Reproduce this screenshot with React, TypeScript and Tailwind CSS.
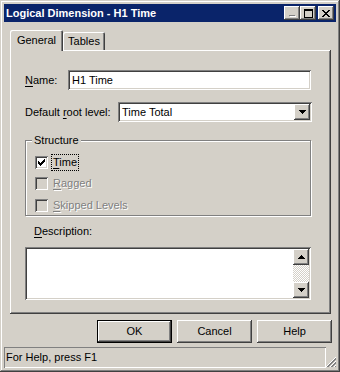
import React from 'react';

const raised = "shadow-[inset_-1px_-1px_#404040,inset_1px_1px_#ffffff,inset_-2px_-2px_#808080]";
const sunken = "shadow-[inset_1px_1px_#808080,inset_-1px_-1px_#ffffff,inset_2px_2px_#404040,inset_-2px_-2px_#d4d0c8]";

const U = ({ children }: { children: React.ReactNode }) => <span className="underline underline-offset-[2px]">{children}</span>;

const TitleButton = ({ children }: { children: React.ReactNode }) => (
  <div className={`w-[16px] h-[14px] bg-[#d4d0c8] flex items-center justify-center ${raised}`}>{children}</div>
);

const Checkbox = ({ checked, disabled }: { checked?: boolean; disabled?: boolean }) => (
  <div className={`w-[13px] h-[13px] shrink-0 relative ${sunken} ${disabled ? 'bg-[#d4d0c8]' : 'bg-white'}`}>
    {checked && (
      <svg width="13" height="13" viewBox="0 0 13 13" className="absolute left-0 top-0" shapeRendering="crispEdges">
        <path fill="#000" d="M9 3h1v1h-1zM8 4h2v1h-2zM3 5h1v1h-1zM7 5h3v1h-3zM3 6h2v1h-2zM6 6h3v1h-3zM3 7h5v1h-5zM4 8h3v1h-3zM5 9h1v1h-1z" />
      </svg>
    )}
  </div>
);

const ArrowBtn = ({ dir, disabled }: { dir: 'up' | 'down'; disabled?: boolean }) => (
  <div className={`w-[16px] h-[16px] bg-[#d4d0c8] flex items-center justify-center ${raised}`}>
    <svg width="7" height="4" viewBox="0 0 7 4" shapeRendering="crispEdges">
      <path fill={disabled ? '#808080' : '#000'} d={dir === 'down' ? 'M0 0h7v1h-7zM1 1h5v1h-5zM2 2h3v1h-3zM3 3h1v1h-1z' : 'M3 0h1v1h-1zM2 1h3v1h-3zM1 2h5v1h-5zM0 3h7v1h-7z'} />
    </svg>
  </div>
);

const PushButton = ({ label, isDefault }: { label: string; isDefault?: boolean }) => (
  <div className={`w-[75px] h-[23px] bg-[#d4d0c8] flex items-center justify-center ${isDefault ? 'shadow-[inset_0_0_0_1px_#000,inset_-2px_-2px_#404040,inset_2px_2px_#ffffff,inset_-3px_-3px_#808080]' : raised}`}>
    {label}
  </div>
);

export default function App() {
  return (
    <div
      className="w-[340px] h-[372px] bg-[#d4d0c8] p-[4px] flex flex-col text-[11px] text-black leading-none shadow-[inset_-1px_-1px_#404040,inset_1px_1px_#d4d0c8,inset_-2px_-2px_#808080,inset_2px_2px_#ffffff]"
      style={{ fontFamily: '"Liberation Sans", Arial, sans-serif' }}
    >
      {/* Title bar */}
      <div className="h-[18px] bg-[#0a246a] flex items-center justify-between pl-[2px] pr-[2px]">
        <span className="text-white font-bold text-[11px]">Logical Dimension - H1 Time</span>
        <div className="flex items-center">
          <TitleButton>
            <svg width="8" height="8" viewBox="0 0 8 8" shapeRendering="crispEdges">
              <path fill="#ffffff" d="M2 7h6v1h-6z" />
              <path fill="#808080" d="M1 6h6v1h-6z" />
            </svg>
          </TitleButton>
          <TitleButton>
            <svg width="9" height="9" viewBox="0 0 9 9" shapeRendering="crispEdges">
              <path fill="#000" d="M0 0h9v2h-9zM0 2h1v7h-1zM8 2h1v7h-1zM0 8h9v1h-9z" />
            </svg>
          </TitleButton>
          <div className="w-[2px]" />
          <TitleButton>
            <svg width="8" height="7" viewBox="0 0 8 7" shapeRendering="crispEdges">
              <path fill="#000" d="M0 0h2v1h-2zM6 0h2v1h-2zM1 1h2v1h-2zM5 1h2v1h-2zM2 2h4v1h-4zM3 3h2v1h-2zM2 4h4v1h-4zM1 5h2v1h-2zM5 5h2v1h-2zM0 6h2v1h-2zM6 6h2v1h-2z" />
            </svg>
          </TitleButton>
        </div>
      </div>

      {/* Tabs */}
      <div className="mt-[8px] ml-[6px] flex items-end h-[20px]">
        <div className="relative z-10 h-[21px] mb-[-1px] w-[53px] bg-[#d4d0c8] flex items-center justify-center pb-[1px] rounded-t-[2px] shadow-[inset_1px_1px_#ffffff,inset_-1px_0_#404040,inset_-2px_0_#808080]">
          General
        </div>
        <div className="h-[18px] w-[42px] bg-[#d4d0c8] flex items-center justify-center rounded-t-[2px] shadow-[inset_1px_1px_#ffffff,inset_-1px_0_#404040,inset_-2px_0_#808080]">
          Tables
        </div>
      </div>

      {/* Panel */}
      <div className={`ml-[6px] w-[321px] h-[264px] pt-[20px] pl-[15px] flex flex-col ${raised}`}>
        <div className="flex items-center h-[20px]">
          <span className="w-[43px]"><U>N</U>ame:</span>
          <div className={`w-[243px] h-[20px] bg-white flex items-center pl-[4px] ${sunken}`}>H1 Time</div>
        </div>

        <div className="flex items-center h-[20px] mt-[12px]">
          <span className="w-[93px]">Default <U>r</U>oot level:</span>
          <div className={`w-[194px] h-[20px] bg-white flex items-center justify-between pl-[4px] pr-[2px] ${sunken}`}>
            <span>Time Total</span>
            <ArrowBtn dir="down" />
          </div>
        </div>

        {/* Group box */}
        <div className="relative mt-[18px] w-[286px] h-[76px] border border-[#808080] shadow-[inset_1px_1px_#ffffff,1px_1px_#ffffff] pl-[9px] pt-[15px] flex flex-col">
          <span className="absolute left-[6px] top-[-6px] bg-[#d4d0c8] px-[2px]">Structure</span>
          <div className="flex items-center h-[13px]">
            <Checkbox checked />
            <span className="ml-[3px] border border-dotted border-black px-[1px] py-[2px]"><U>T</U>ime</span>
          </div>
          <div className="flex items-center h-[13px] mt-[8px] text-[#808080] [text-shadow:1px_1px_#ffffff]">
            <Checkbox disabled />
            <span className="ml-[5px]"><U>R</U>agged</span>
          </div>
          <div className="flex items-center h-[13px] mt-[9px] text-[#808080] [text-shadow:1px_1px_#ffffff]">
            <Checkbox disabled />
            <span className="ml-[5px]"><U>S</U>kipped Levels</span>
          </div>
        </div>

        <div className="mt-[9px] ml-[9px] h-[12px] flex items-center"><U>D</U>escription:</div>

        <div className={`mt-[10px] w-[286px] h-[53px] bg-white flex justify-end p-[2px] ${sunken}`}>
          <div className="w-[16px] h-full flex flex-col bg-[repeating-conic-gradient(#d4d0c8_0%_25%,#ffffff_0%_50%)] bg-[length:2px_2px]">
            <ArrowBtn dir="up" />
            <div className="flex-1" />
            <ArrowBtn dir="down" />
          </div>
        </div>
      </div>

      {/* Buttons */}
      <div className="mt-[6px] pl-[93px] flex gap-[5px]">
        <PushButton label="OK" isDefault />
        <PushButton label="Cancel" />
        <PushButton label="Help" />
      </div>

      {/* Status bar */}
      <div className="mt-[4px] h-[21px] flex">
        <div className="flex-1 flex items-center pl-[2px] shadow-[inset_1px_1px_#808080,inset_-1px_-1px_#ffffff]">
          For Help, press F1
        </div>
        <div className="w-[10px] h-full flex items-end">
          <svg width="10" height="12" viewBox="0 0 10 12" shapeRendering="crispEdges">
            <path stroke="#ffffff" strokeWidth="1" d="M10 1L0 11M10 5L4 11M10 9L8 11" />
            <path stroke="#808080" strokeWidth="1" d="M10 2L1 11M10 3L2 11M10 6L5 11M10 7L6 11M10 10L9 11" />
          </svg>
        </div>
      </div>
    </div>
  );
}
